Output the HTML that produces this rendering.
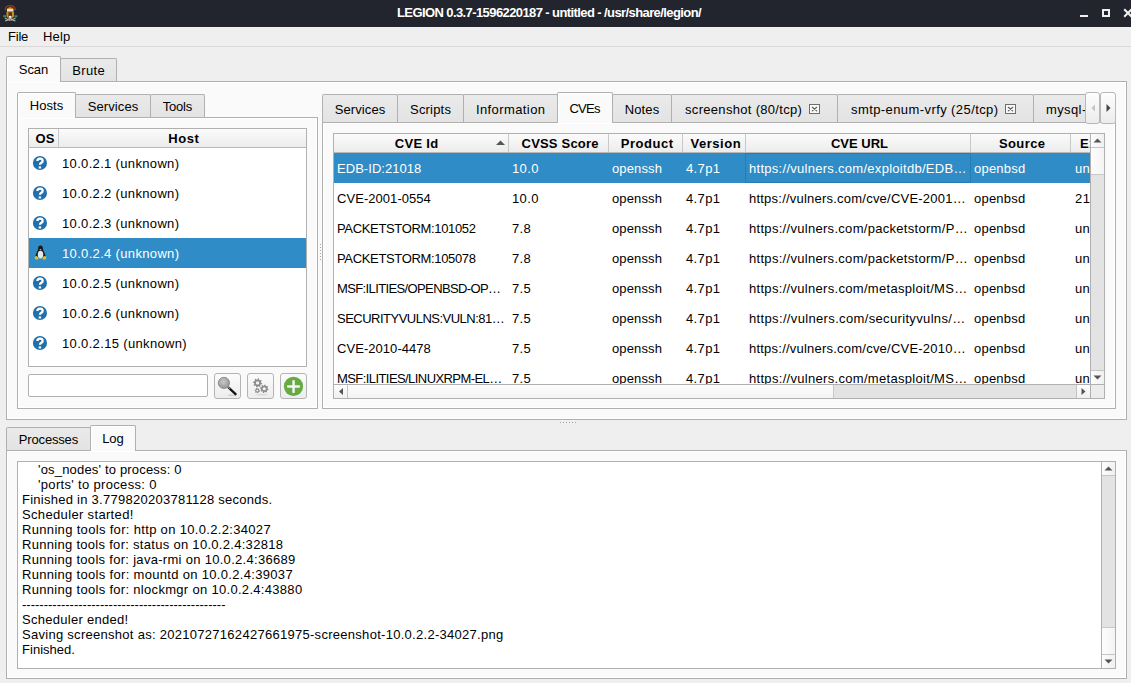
<!DOCTYPE html>
<html><head><meta charset="utf-8"><title>LEGION</title><style>html,body{margin:0;padding:0}
body{width:1131px;height:683px;overflow:hidden;background:#efefef;position:relative;font-family:"Liberation Sans",sans-serif;font-size:13px}
div,span,svg{position:absolute}
span{white-space:pre;line-height:15px}</style></head><body>
<div style="left:0px;top:0px;width:1131px;height:27px;background:#22252d"></div>
<svg style="position:absolute;left:0px;top:2px" width="22" height="22" viewBox="0 0 22 22">
<path d="M5.2 8.2 Q5.5 3.6 10.2 3.5 Q14.9 3.6 15.2 8.2" stroke="#8e3424" stroke-width="1.7" fill="none"/>
<path d="M6.8 8 Q7 5.2 10.2 5.2 Q13.4 5.2 13.6 8z" fill="#c89a28"/>
<rect x="7" y="7.2" width="6.4" height="2.4" fill="#e8e8e0"/>
<path d="M6.5 9.6 H14 V14.5 L12.6 15.8 H7.9 L6.5 14.5z" fill="#c4921a"/>
<rect x="8.4" y="10.2" width="3.6" height="4.6" fill="#5a3210"/>
<ellipse cx="10.2" cy="14.8" rx="1.4" ry="1.1" fill="#f4f4f4"/>
<rect x="3.2" y="13.2" width="2.8" height="2" fill="#2f8a78"/>
<rect x="14.5" y="13.2" width="2.8" height="2" fill="#2f8a78"/>
<path d="M4.8 18.8 L10.2 15.6 L15.8 18.8 L15 19.6 L10.2 17.4 L5.6 19.6z" fill="#b8b8b0"/>
<path d="M4.8 16 L10 18.5 M15.6 16 L10.4 18.5" stroke="#a8a8a0" stroke-width="1.2"/>
</svg>
<span style="left:397.00px;top:5px;letter-spacing:-0.594px;color:#ffffff;font-weight:bold;">LEGION 0.3.7-1596220187 - untitled - /usr/share/legion/</span>
<div style="left:1080px;top:15px;width:8px;height:2px;background:#f0f0f0"></div>
<div style="left:1102px;top:9px;width:8px;height:8px;border:2px solid #f0f0f0;box-sizing:border-box"></div>
<svg style="position:absolute;left:1123px;top:8px" width="10" height="10" viewBox="0 0 10 10">
<path d="M1.2 1.2 L8.8 8.8 M8.8 1.2 L1.2 8.8" stroke="#f0f0f0" stroke-width="2"/></svg>
<div style="left:0px;top:27px;width:1131px;height:19px;background:#efefef"></div>
<span style="left:8.00px;top:29px;letter-spacing:-0.219px;color:#000;">File</span>
<span style="left:43.00px;top:29px;letter-spacing:0.156px;color:#000;">Help</span>
<div style="left:0px;top:46px;width:1131px;height:1px;background:#d9d9d9"></div>
<div style="left:6px;top:81px;width:1121px;height:339px;background:#fafafa;border:1px solid #b0b0b0;box-sizing:border-box;box-shadow:inset 0 0 0 1px #ffffff"></div>
<div style="left:60px;top:58px;width:57px;height:23px;background:linear-gradient(#eaeaea,#e3e3e3);border:1px solid #b0b0b0;border-bottom:none;border-radius:2px 2px 0 0;box-sizing:border-box"></div>
<span style="left:72.24px;top:63px;letter-spacing:0.359px;color:#000;">Brute</span>
<div style="left:6px;top:56px;width:55px;height:26px;background:#fafafa;border:1px solid #b0b0b0;border-bottom:none;border-radius:2px 2px 0 0;box-sizing:border-box;box-shadow:inset 1px 1px 0 #fff"></div>
<span style="left:18.85px;top:62px;letter-spacing:-0.113px;color:#000;">Scan</span>
<div style="left:17px;top:117px;width:301px;height:292px;background:#fafafa;border:1px solid #b0b0b0;box-sizing:border-box;box-shadow:inset 0 0 0 1px #ffffff"></div>
<div style="left:75px;top:94px;width:76px;height:23px;background:linear-gradient(#eaeaea,#e3e3e3);border:1px solid #b0b0b0;border-bottom:none;border-radius:2px 2px 0 0;box-sizing:border-box"></div>
<span style="left:87.74px;top:99px;letter-spacing:0.096px;color:#000;">Services</span>
<div style="left:150px;top:94px;width:55px;height:23px;background:linear-gradient(#eaeaea,#e3e3e3);border:1px solid #b0b0b0;border-bottom:none;border-radius:2px 2px 0 0;box-sizing:border-box"></div>
<span style="left:162.64px;top:99px;letter-spacing:-0.159px;color:#000;">Tools</span>
<div style="left:17px;top:92px;width:59px;height:26px;background:#fafafa;border:1px solid #b0b0b0;border-bottom:none;border-radius:2px 2px 0 0;box-sizing:border-box;box-shadow:inset 1px 1px 0 #fff"></div>
<span style="left:29.75px;top:98px;letter-spacing:0.069px;color:#000;">Hosts</span>
<div style="left:28px;top:128px;width:279px;height:239px;background:#fff;border:1px solid #b0b0b0;box-sizing:border-box"></div>
<div style="left:29px;top:129px;width:277px;height:18px;background:linear-gradient(#fbfbfb,#ececec)"></div>
<div style="left:29px;top:147px;width:277px;height:1px;background:#b9b9b9"></div>
<div style="left:58px;top:129px;width:1px;height:18px;background:#c9c9c9"></div>
<span style="left:35.59px;top:131px;letter-spacing:0.031px;color:#000;font-weight:bold;">OS</span>
<span style="left:168.20px;top:131px;letter-spacing:0.570px;color:#000;font-weight:bold;">Host</span>
<svg style="position:absolute;left:32px;top:155px" width="16" height="16" viewBox="0 0 16 16">
<circle cx="7.95" cy="8" r="7.05" fill="#1f70ac"/>
<path d="M5.4 6.1 Q5.4 3.7 8 3.7 Q10.65 3.7 10.65 5.9 Q10.65 7.2 9.2 7.9 Q8 8.5 8 9.8" stroke="#fff" stroke-width="2.3" fill="none"/>
<rect x="6.7" y="11.4" width="2.4" height="2.1" fill="#fff"/>
</svg>
<span style="left:62.00px;top:156px;letter-spacing:0.336px;color:#000;">10.0.2.1 (unknown)</span>
<svg style="position:absolute;left:32px;top:185px" width="16" height="16" viewBox="0 0 16 16">
<circle cx="7.95" cy="8" r="7.05" fill="#1f70ac"/>
<path d="M5.4 6.1 Q5.4 3.7 8 3.7 Q10.65 3.7 10.65 5.9 Q10.65 7.2 9.2 7.9 Q8 8.5 8 9.8" stroke="#fff" stroke-width="2.3" fill="none"/>
<rect x="6.7" y="11.4" width="2.4" height="2.1" fill="#fff"/>
</svg>
<span style="left:62.00px;top:186px;letter-spacing:0.336px;color:#000;">10.0.2.2 (unknown)</span>
<svg style="position:absolute;left:32px;top:215px" width="16" height="16" viewBox="0 0 16 16">
<circle cx="7.95" cy="8" r="7.05" fill="#1f70ac"/>
<path d="M5.4 6.1 Q5.4 3.7 8 3.7 Q10.65 3.7 10.65 5.9 Q10.65 7.2 9.2 7.9 Q8 8.5 8 9.8" stroke="#fff" stroke-width="2.3" fill="none"/>
<rect x="6.7" y="11.4" width="2.4" height="2.1" fill="#fff"/>
</svg>
<span style="left:62.00px;top:216px;letter-spacing:0.336px;color:#000;">10.0.2.3 (unknown)</span>
<div style="left:29px;top:238px;width:277px;height:30px;background:#308cc6"></div>
<svg style="position:absolute;left:31.5px;top:244px" width="17" height="17" viewBox="0 0 16 16">
<path d="M8 1.5 Q10.3 1.5 10.3 4.5 Q10.5 6.5 11.8 8.5 Q13 10.5 12.5 13 L3.5 13 Q3 10.5 4.2 8.5 Q5.5 6.5 5.7 4.5 Q5.7 1.5 8 1.5z" fill="#1a1a1a"/>
<ellipse cx="8" cy="10" rx="2.6" ry="3.6" fill="#dde8f0"/>
<path d="M6.8 4.6 L9.2 4.6 L8 5.8z" fill="#e8c020"/>
<path d="M2.5 12.5 Q3.5 10.5 5.5 12 L6.2 14 Q4.5 15.2 2.8 14z M13.5 12.5 Q12.5 10.5 10.5 12 L9.8 14 Q11.5 15.2 13.2 14z" fill="#d8c030"/>
</svg>
<span style="left:62.00px;top:246px;letter-spacing:0.336px;color:#fff;">10.0.2.4 (unknown)</span>
<svg style="position:absolute;left:32px;top:275px" width="16" height="16" viewBox="0 0 16 16">
<circle cx="7.95" cy="8" r="7.05" fill="#1f70ac"/>
<path d="M5.4 6.1 Q5.4 3.7 8 3.7 Q10.65 3.7 10.65 5.9 Q10.65 7.2 9.2 7.9 Q8 8.5 8 9.8" stroke="#fff" stroke-width="2.3" fill="none"/>
<rect x="6.7" y="11.4" width="2.4" height="2.1" fill="#fff"/>
</svg>
<span style="left:62.00px;top:276px;letter-spacing:0.336px;color:#000;">10.0.2.5 (unknown)</span>
<svg style="position:absolute;left:32px;top:305px" width="16" height="16" viewBox="0 0 16 16">
<circle cx="7.95" cy="8" r="7.05" fill="#1f70ac"/>
<path d="M5.4 6.1 Q5.4 3.7 8 3.7 Q10.65 3.7 10.65 5.9 Q10.65 7.2 9.2 7.9 Q8 8.5 8 9.8" stroke="#fff" stroke-width="2.3" fill="none"/>
<rect x="6.7" y="11.4" width="2.4" height="2.1" fill="#fff"/>
</svg>
<span style="left:62.00px;top:306px;letter-spacing:0.336px;color:#000;">10.0.2.6 (unknown)</span>
<svg style="position:absolute;left:32px;top:335px" width="16" height="16" viewBox="0 0 16 16">
<circle cx="7.95" cy="8" r="7.05" fill="#1f70ac"/>
<path d="M5.4 6.1 Q5.4 3.7 8 3.7 Q10.65 3.7 10.65 5.9 Q10.65 7.2 9.2 7.9 Q8 8.5 8 9.8" stroke="#fff" stroke-width="2.3" fill="none"/>
<rect x="6.7" y="11.4" width="2.4" height="2.1" fill="#fff"/>
</svg>
<span style="left:62.00px;top:336px;letter-spacing:0.340px;color:#000;">10.0.2.15 (unknown)</span>
<div style="left:28px;top:374px;width:180px;height:23px;background:#fff;border:1px solid #b0b0b0;border-radius:2px;box-sizing:border-box"></div>
<div style="left:214px;top:373px;width:27px;height:26px;background:linear-gradient(#fbfbfb,#ededed);border:1px solid #b4b4b4;border-radius:3px;box-sizing:border-box"></div>
<div style="left:247px;top:373px;width:27px;height:26px;background:linear-gradient(#fbfbfb,#ededed);border:1px solid #b4b4b4;border-radius:3px;box-sizing:border-box"></div>
<div style="left:280px;top:373px;width:27px;height:26px;background:linear-gradient(#fbfbfb,#ededed);border:1px solid #b4b4b4;border-radius:3px;box-sizing:border-box"></div>
<svg style="position:absolute;left:214px;top:373px" width="27" height="26" viewBox="0 0 27 26">
<defs><radialGradient id="mg" cx="0.45" cy="0.4" r="0.65"><stop offset="0" stop-color="#c8cac8"/><stop offset="1" stop-color="#8e9290"/></radialGradient></defs>
<ellipse cx="18" cy="22.3" rx="4" ry="1" fill="#c8c8c8" opacity="0.7"/>
<line x1="14.6" y1="14.6" x2="21.6" y2="21.2" stroke="#151515" stroke-width="2.3" stroke-linecap="round"/>
<line x1="14" y1="14" x2="16" y2="16" stroke="#7a8088" stroke-width="1.2"/>
<circle cx="9.9" cy="9.9" r="5.6" fill="url(#mg)" stroke="#808080" stroke-width="0.8"/>
</svg>
<svg style="position:absolute;left:247px;top:373px" width="27" height="26" viewBox="0 0 27 26"><ellipse cx="14.5" cy="21.6" rx="6.5" ry="0.9" fill="#d0d0d0" opacity="0.6"/><polygon points="15.18,10.35 15.00,11.24 13.60,11.50 13.23,12.06 13.52,13.46 12.77,13.96 11.59,13.16 10.93,13.29 10.15,14.48 9.26,14.30 9.00,12.90 8.44,12.53 7.04,12.82 6.54,12.07 7.34,10.89 7.21,10.23 6.02,9.45 6.20,8.56 7.60,8.30 7.97,7.74 7.68,6.34 8.43,5.84 9.61,6.64 10.27,6.51 11.05,5.32 11.94,5.50 12.20,6.90 12.76,7.27 14.16,6.98 14.66,7.73 13.86,8.91 13.99,9.57" fill="#8c8c8c"/><circle cx="10.6" cy="9.9" r="1.66" fill="#f6f6f6"/><polygon points="12.98,17.95 12.79,18.63 11.89,18.82 11.52,19.19 11.33,20.09 10.65,20.28 10.04,19.58 9.54,19.45 8.66,19.74 8.16,19.24 8.45,18.36 8.32,17.86 7.62,17.25 7.81,16.57 8.71,16.38 9.08,16.01 9.27,15.11 9.95,14.92 10.56,15.62 11.06,15.75 11.94,15.46 12.44,15.96 12.15,16.84 12.28,17.34" fill="#8c8c8c"/><circle cx="10.3" cy="17.6" r="0.97" fill="#f6f6f6"/><polygon points="21.58,16.22 21.41,17.05 20.11,17.30 19.76,17.82 20.03,19.12 19.33,19.59 18.22,18.84 17.61,18.97 16.88,20.08 16.05,19.91 15.80,18.61 15.28,18.26 13.98,18.53 13.51,17.83 14.26,16.72 14.13,16.11 13.02,15.38 13.19,14.55 14.49,14.30 14.84,13.78 14.57,12.48 15.27,12.01 16.38,12.76 16.99,12.63 17.72,11.52 18.55,11.69 18.80,12.99 19.32,13.34 20.62,13.07 21.09,13.77 20.34,14.88 20.47,15.49" fill="#8c8c8c"/><circle cx="17.3" cy="15.8" r="1.55" fill="#f6f6f6"/></svg>
<svg style="position:absolute;left:283px;top:376px" width="21" height="21" viewBox="0 0 21 21">
<circle cx="10.5" cy="10.4" r="9.6" fill="#68aa42"/>
<rect x="9.3" y="3.9" width="2.5" height="13.2" rx="1.2" fill="#f4f4f4"/>
<rect x="3.9" y="9.2" width="13.2" height="2.5" rx="1.2" fill="#f4f4f4"/>
</svg>
<div style="left:320px;top:244px;width:1px;height:1px;background:#a4a4a4"></div>
<div style="left:560px;top:422px;width:1px;height:1px;background:#a4a4a4"></div>
<div style="left:320px;top:247px;width:1px;height:1px;background:#a4a4a4"></div>
<div style="left:563px;top:422px;width:1px;height:1px;background:#a4a4a4"></div>
<div style="left:320px;top:250px;width:1px;height:1px;background:#a4a4a4"></div>
<div style="left:566px;top:422px;width:1px;height:1px;background:#a4a4a4"></div>
<div style="left:320px;top:253px;width:1px;height:1px;background:#a4a4a4"></div>
<div style="left:569px;top:422px;width:1px;height:1px;background:#a4a4a4"></div>
<div style="left:320px;top:256px;width:1px;height:1px;background:#a4a4a4"></div>
<div style="left:572px;top:422px;width:1px;height:1px;background:#a4a4a4"></div>
<div style="left:320px;top:259px;width:1px;height:1px;background:#a4a4a4"></div>
<div style="left:575px;top:422px;width:1px;height:1px;background:#a4a4a4"></div>
<div style="left:322px;top:122px;width:794px;height:287px;background:#fafafa;border:1px solid #b0b0b0;box-sizing:border-box;box-shadow:inset 0 0 0 1px #ffffff"></div>
<div style="left:322px;top:88px;width:763px;height:36px;overflow:hidden;">
<div style="left:0px;top:6px;width:76px;height:28px;background:linear-gradient(#eaeaea,#e3e3e3);border:1px solid #b0b0b0;border-bottom:none;border-radius:2px 2px 0 0;box-sizing:border-box"></div>
<span style="left:12.74px;top:14px;letter-spacing:0.096px;color:#000;">Services</span>
<div style="left:75px;top:6px;width:67px;height:28px;background:linear-gradient(#eaeaea,#e3e3e3);border:1px solid #b0b0b0;border-bottom:none;border-radius:2px 2px 0 0;box-sizing:border-box"></div>
<span style="left:88.06px;top:14px;letter-spacing:0.190px;color:#000;">Scripts</span>
<div style="left:141px;top:6px;width:95px;height:28px;background:linear-gradient(#eaeaea,#e3e3e3);border:1px solid #b0b0b0;border-bottom:none;border-radius:2px 2px 0 0;box-sizing:border-box"></div>
<span style="left:153.96px;top:14px;letter-spacing:0.403px;color:#000;">Information</span>
<div style="left:290px;top:6px;width:60px;height:28px;background:linear-gradient(#eaeaea,#e3e3e3);border:1px solid #b0b0b0;border-bottom:none;border-radius:2px 2px 0 0;box-sizing:border-box"></div>
<span style="left:302.73px;top:14px;letter-spacing:0.141px;color:#000;">Notes</span>
<div style="left:349px;top:6px;width:167px;height:28px;background:linear-gradient(#eaeaea,#e3e3e3);border:1px solid #b0b0b0;border-bottom:none;border-radius:2px 2px 0 0;box-sizing:border-box"></div>
<span style="left:363.00px;top:14px;letter-spacing:0.313px;color:#000;">screenshot (80/tcp)</span>
<div style="left:487px;top:16px;width:11px;height:10px;border:1px solid #6e6e6e;box-sizing:border-box;background:#f8f8f8"></div>
<svg style="position:absolute;left:487px;top:16px" width="11" height="10" viewBox="0 0 11 10"><path d="M3.3 3.3 L7.7 6.9 M7.7 3.3 L3.3 6.9" stroke="#606060" stroke-width="1.2" stroke-linecap="round"/></svg>
<div style="left:515px;top:6px;width:197px;height:28px;background:linear-gradient(#eaeaea,#e3e3e3);border:1px solid #b0b0b0;border-bottom:none;border-radius:2px 2px 0 0;box-sizing:border-box"></div>
<span style="left:529.00px;top:14px;letter-spacing:0.414px;color:#000;">smtp-enum-vrfy (25/tcp)</span>
<div style="left:683px;top:16px;width:11px;height:10px;border:1px solid #6e6e6e;box-sizing:border-box;background:#f8f8f8"></div>
<svg style="position:absolute;left:683px;top:16px" width="11" height="10" viewBox="0 0 11 10"><path d="M3.3 3.3 L7.7 6.9 M7.7 3.3 L3.3 6.9" stroke="#606060" stroke-width="1.2" stroke-linecap="round"/></svg>
<div style="left:711px;top:6px;width:218px;height:28px;background:linear-gradient(#eaeaea,#e3e3e3);border:1px solid #b0b0b0;border-bottom:none;border-radius:2px 2px 0 0;box-sizing:border-box"></div>
<span style="left:724.00px;top:14px;letter-spacing:0.388px;color:#000;">mysql-info (3306/tcp)</span>
<div style="left:235px;top:4px;width:56px;height:31px;background:#fafafa;border:1px solid #b0b0b0;border-bottom:none;border-radius:2px 2px 0 0;box-sizing:border-box;box-shadow:inset 1px 1px 0 #fff"></div>
<span style="left:247.44px;top:13px;letter-spacing:-0.707px;color:#000;">CVEs</span>
</div>
<div style="left:1085px;top:92px;width:15px;height:32px;background:linear-gradient(#fdfdfd,#ececec);border:1px solid #b8b8b8;border-radius:3px;box-sizing:border-box"></div>
<div style="left:1100px;top:92px;width:16px;height:32px;background:linear-gradient(#fdfdfd,#ececec);border:1px solid #b8b8b8;border-radius:3px;box-sizing:border-box"></div>
<svg style="position:absolute;left:1086px;top:92px" width="30" height="32" viewBox="0 0 30 32"><path d="M9 12.5 L5.5 16 L9 19.5z" fill="#c4c4c4"/><path d="M20.5 12 L24.5 16 L20.5 20z" fill="#444"/></svg>
<div style="left:333px;top:133px;width:772px;height:266px;background:#fff;border:1px solid #b0b0b0;box-sizing:border-box"></div>
<div style="left:334px;top:134px;width:756px;height:18px;background:linear-gradient(#fbfbfb,#ececec)"></div>
<div style="left:334px;top:152px;width:756px;height:1px;background:#b9b9b9"></div>
<div style="left:508px;top:134px;width:1px;height:18px;background:#c9c9c9"></div>
<div style="left:608px;top:134px;width:1px;height:18px;background:#c9c9c9"></div>
<div style="left:682px;top:134px;width:1px;height:18px;background:#c9c9c9"></div>
<div style="left:745px;top:134px;width:1px;height:18px;background:#c9c9c9"></div>
<div style="left:970px;top:134px;width:1px;height:18px;background:#c9c9c9"></div>
<div style="left:1070px;top:134px;width:1px;height:18px;background:#c9c9c9"></div>
<div style="left:334px;top:134px;width:756px;height:18px;overflow:hidden;">
<span style="left:60.87px;top:2px;letter-spacing:0.273px;color:#000;font-weight:bold;">CVE Id</span>
<span style="left:187.56px;top:2px;letter-spacing:0.192px;color:#000;font-weight:bold;">CVSS Score</span>
<span style="left:286.80px;top:2px;letter-spacing:0.549px;color:#000;font-weight:bold;">Product</span>
<span style="left:356.40px;top:2px;letter-spacing:0.538px;color:#000;font-weight:bold;">Version</span>
<span style="left:496.96px;top:2px;letter-spacing:0.004px;color:#000;font-weight:bold;">CVE URL</span>
<span style="left:664.91px;top:2px;letter-spacing:0.422px;color:#000;font-weight:bold;">Source</span>
<span style="left:746.00px;top:2px;letter-spacing:0.541px;color:#000;font-weight:bold;">Exploit ID</span>
<svg style="position:absolute;left:162px;top:6px" width="9" height="5" viewBox="0 0 9 5"><path d="M0 5 L4.5 0.5 L9 5z" fill="#555"/></svg>
</div>
<div style="left:334px;top:153px;width:756px;height:231px;overflow:hidden;">
<div style="left:0px;top:0px;width:756px;height:30px;background:#308cc6"></div>
<div style="left:411px;top:0px;width:226px;height:30px;border:1px solid #2a7cb0;box-sizing:border-box"></div>
<span style="left:3.00px;top:8px;letter-spacing:0.047px;color:#fff;">EDB-ID:21018</span>
<span style="left:178.00px;top:8px;letter-spacing:0.355px;color:#fff;">10.0</span>
<span style="left:278.00px;top:8px;letter-spacing:0.129px;color:#fff;">openssh</span>
<span style="left:352.00px;top:8px;letter-spacing:0.362px;color:#fff;">4.7p1</span>
<span style="left:415.00px;top:8px;letter-spacing:0.282px;color:#fff;">https://vulners.com/exploitdb/EDB…</span>
<span style="left:640.00px;top:8px;letter-spacing:0.223px;color:#fff;">openbsd</span>
<span style="left:741.00px;top:8px;letter-spacing:0.355px;color:#fff;">unknown</span>
<span style="left:3.00px;top:38px;letter-spacing:0.052px;color:#000;">CVE-2001-0554</span>
<span style="left:178.00px;top:38px;letter-spacing:0.355px;color:#000;">10.0</span>
<span style="left:278.00px;top:38px;letter-spacing:0.129px;color:#000;">openssh</span>
<span style="left:352.00px;top:38px;letter-spacing:0.362px;color:#000;">4.7p1</span>
<span style="left:415.00px;top:38px;letter-spacing:0.223px;color:#000;">https://vulners.com/cve/CVE-2001…</span>
<span style="left:640.00px;top:38px;letter-spacing:0.223px;color:#000;">openbsd</span>
<span style="left:741.00px;top:38px;letter-spacing:0.406px;color:#000;">21018</span>
<span style="left:3.00px;top:68px;letter-spacing:-0.341px;color:#000;">PACKETSTORM:101052</span>
<span style="left:178.00px;top:68px;letter-spacing:0.339px;color:#000;">7.8</span>
<span style="left:278.00px;top:68px;letter-spacing:0.129px;color:#000;">openssh</span>
<span style="left:352.00px;top:68px;letter-spacing:0.362px;color:#000;">4.7p1</span>
<span style="left:415.00px;top:68px;letter-spacing:0.298px;color:#000;">https://vulners.com/packetstorm/P…</span>
<span style="left:640.00px;top:68px;letter-spacing:0.223px;color:#000;">openbsd</span>
<span style="left:741.00px;top:68px;letter-spacing:0.355px;color:#000;">unknown</span>
<span style="left:3.00px;top:98px;letter-spacing:-0.341px;color:#000;">PACKETSTORM:105078</span>
<span style="left:178.00px;top:98px;letter-spacing:0.339px;color:#000;">7.8</span>
<span style="left:278.00px;top:98px;letter-spacing:0.129px;color:#000;">openssh</span>
<span style="left:352.00px;top:98px;letter-spacing:0.362px;color:#000;">4.7p1</span>
<span style="left:415.00px;top:98px;letter-spacing:0.298px;color:#000;">https://vulners.com/packetstorm/P…</span>
<span style="left:640.00px;top:98px;letter-spacing:0.223px;color:#000;">openbsd</span>
<span style="left:741.00px;top:98px;letter-spacing:0.355px;color:#000;">unknown</span>
<span style="left:3.00px;top:128px;letter-spacing:-0.622px;color:#000;">MSF:ILITIES/OPENBSD-OP…</span>
<span style="left:178.00px;top:128px;letter-spacing:0.339px;color:#000;">7.5</span>
<span style="left:278.00px;top:128px;letter-spacing:0.129px;color:#000;">openssh</span>
<span style="left:352.00px;top:128px;letter-spacing:0.362px;color:#000;">4.7p1</span>
<span style="left:415.00px;top:128px;letter-spacing:0.306px;color:#000;">https://vulners.com/metasploit/MS…</span>
<span style="left:640.00px;top:128px;letter-spacing:0.223px;color:#000;">openbsd</span>
<span style="left:741.00px;top:128px;letter-spacing:0.355px;color:#000;">unknown</span>
<span style="left:3.00px;top:158px;letter-spacing:-0.511px;color:#000;">SECURITYVULNS:VULN:81…</span>
<span style="left:178.00px;top:158px;letter-spacing:0.339px;color:#000;">7.5</span>
<span style="left:278.00px;top:158px;letter-spacing:0.129px;color:#000;">openssh</span>
<span style="left:352.00px;top:158px;letter-spacing:0.362px;color:#000;">4.7p1</span>
<span style="left:415.00px;top:158px;letter-spacing:0.347px;color:#000;">https://vulners.com/securityvulns/…</span>
<span style="left:640.00px;top:158px;letter-spacing:0.223px;color:#000;">openbsd</span>
<span style="left:741.00px;top:158px;letter-spacing:0.355px;color:#000;">unknown</span>
<span style="left:3.00px;top:188px;letter-spacing:0.052px;color:#000;">CVE-2010-4478</span>
<span style="left:178.00px;top:188px;letter-spacing:0.339px;color:#000;">7.5</span>
<span style="left:278.00px;top:188px;letter-spacing:0.129px;color:#000;">openssh</span>
<span style="left:352.00px;top:188px;letter-spacing:0.362px;color:#000;">4.7p1</span>
<span style="left:415.00px;top:188px;letter-spacing:0.223px;color:#000;">https://vulners.com/cve/CVE-2010…</span>
<span style="left:640.00px;top:188px;letter-spacing:0.223px;color:#000;">openbsd</span>
<span style="left:741.00px;top:188px;letter-spacing:0.355px;color:#000;">unknown</span>
<span style="left:3.00px;top:218px;letter-spacing:-0.574px;color:#000;">MSF:ILITIES/LINUXRPM-EL…</span>
<span style="left:178.00px;top:218px;letter-spacing:0.339px;color:#000;">7.5</span>
<span style="left:278.00px;top:218px;letter-spacing:0.129px;color:#000;">openssh</span>
<span style="left:352.00px;top:218px;letter-spacing:0.362px;color:#000;">4.7p1</span>
<span style="left:415.00px;top:218px;letter-spacing:0.306px;color:#000;">https://vulners.com/metasploit/MS…</span>
<span style="left:640.00px;top:218px;letter-spacing:0.223px;color:#000;">openbsd</span>
<span style="left:741.00px;top:218px;letter-spacing:0.355px;color:#000;">unknown</span>
</div>
<div style="left:333px;top:384px;width:772px;height:15px;background:#e3e3e3;border:1px solid #b0b0b0;box-sizing:border-box"></div>
<div style="left:334px;top:385px;width:13px;height:13px;background:linear-gradient(#fdfdfd,#f0f0f0)"></div>
<div style="left:347px;top:385px;width:1px;height:13px;background:#c4c4c4"></div>
<div style="left:348px;top:385px;width:486px;height:13px;background:linear-gradient(#fdfdfd,#f3f3f3);border-right:1px solid #c8c8c8;box-sizing:border-box"></div>
<div style="left:1076px;top:385px;width:14px;height:13px;background:linear-gradient(#fdfdfd,#f0f0f0);border-left:1px solid #c4c4c4;box-sizing:border-box"></div>
<div style="left:1090px;top:384px;width:15px;height:15px;background:#ececec;border:1px solid #b0b0b0;box-sizing:border-box"></div>
<svg style="position:absolute;left:334px;top:385px" width="14" height="13" viewBox="0 0 14 13"><path d="M9 3 L5 6.5 L9 10z" fill="#555"/></svg>
<svg style="position:absolute;left:1076px;top:385px" width="14" height="13" viewBox="0 0 14 13"><path d="M5.5 3 L9.5 6.5 L5.5 10z" fill="#555"/></svg>
<div style="left:1090px;top:133px;width:15px;height:252px;background:#e3e3e3;border:1px solid #b0b0b0;box-sizing:border-box"></div>
<div style="left:1091px;top:134px;width:13px;height:13px;background:linear-gradient(90deg,#fdfdfd,#f0f0f0)"></div>
<div style="left:1091px;top:147px;width:13px;height:1px;background:#c4c4c4"></div>
<div style="left:1091px;top:148px;width:13px;height:27px;background:linear-gradient(90deg,#fdfdfd,#f3f3f3);border-bottom:1px solid #c8c8c8;box-sizing:border-box"></div>
<div style="left:1091px;top:370px;width:13px;height:14px;background:linear-gradient(90deg,#fdfdfd,#f0f0f0);border-top:1px solid #c4c4c4;box-sizing:border-box"></div>
<svg style="position:absolute;left:1091px;top:134px" width="13" height="13" viewBox="0 0 13 13"><path d="M2.5 8.5 L6.5 4.5 L10.5 8.5z" fill="#555"/></svg>
<svg style="position:absolute;left:1091px;top:371px" width="13" height="13" viewBox="0 0 13 13"><path d="M2.5 4.5 L6.5 8.5 L10.5 4.5z" fill="#555"/></svg>
<div style="left:6px;top:450px;width:1121px;height:229px;background:#fafafa;border:1px solid #b0b0b0;box-sizing:border-box;box-shadow:inset 0 0 0 1px #ffffff"></div>
<div style="left:6px;top:427px;width:85px;height:23px;background:linear-gradient(#eaeaea,#e3e3e3);border:1px solid #b0b0b0;border-bottom:none;border-radius:2px 2px 0 0;box-sizing:border-box"></div>
<span style="left:18.83px;top:432px;letter-spacing:-0.170px;color:#000;">Processes</span>
<div style="left:90px;top:425px;width:46px;height:26px;background:#fafafa;border:1px solid #b0b0b0;border-bottom:none;border-radius:2px 2px 0 0;box-sizing:border-box;box-shadow:inset 1px 1px 0 #fff"></div>
<span style="left:102.23px;top:431px;letter-spacing:-0.083px;color:#000;">Log</span>
<div style="left:17px;top:461px;width:1099px;height:208px;background:#fff;border:1px solid #b0b0b0;box-sizing:border-box"></div>
<span style="left:38.00px;top:462px;letter-spacing:0.178px;color:#000;">&#x27;os_nodes&#x27; to process: 0</span>
<span style="left:38.00px;top:477px;letter-spacing:0.325px;color:#000;">&#x27;ports&#x27; to process: 0</span>
<span style="left:22.00px;top:492px;letter-spacing:0.262px;color:#000;">Finished in 3.779820203781128 seconds.</span>
<span style="left:22.00px;top:507px;letter-spacing:0.343px;color:#000;">Scheduler started!</span>
<span style="left:22.00px;top:522px;letter-spacing:0.326px;color:#000;">Running tools for: http on 10.0.2.2:34027</span>
<span style="left:22.00px;top:537px;letter-spacing:0.293px;color:#000;">Running tools for: status on 10.0.2.4:32818</span>
<span style="left:22.00px;top:552px;letter-spacing:0.298px;color:#000;">Running tools for: java-rmi on 10.0.2.4:36689</span>
<span style="left:22.00px;top:567px;letter-spacing:0.317px;color:#000;">Running tools for: mountd on 10.0.2.4:39037</span>
<span style="left:22.00px;top:582px;letter-spacing:0.306px;color:#000;">Running tools for: nlockmgr on 10.0.2.4:43880</span>
<span style="left:22.00px;top:597px;letter-spacing:0.000px;color:#000;">-----------------------------------------------</span>
<span style="left:22.00px;top:612px;letter-spacing:0.276px;color:#000;">Scheduler ended!</span>
<span style="left:22.00px;top:627px;letter-spacing:0.283px;color:#000;">Saving screenshot as: 20210727162427661975-screenshot-10.0.2.2-34027.png</span>
<span style="left:22.00px;top:642px;letter-spacing:0.024px;color:#000;">Finished.</span>
<div style="left:1101px;top:461px;width:15px;height:208px;background:#e3e3e3;border:1px solid #b0b0b0;box-sizing:border-box"></div>
<div style="left:1102px;top:462px;width:13px;height:13px;background:linear-gradient(90deg,#fdfdfd,#f0f0f0)"></div>
<div style="left:1102px;top:475px;width:13px;height:1px;background:#c4c4c4"></div>
<div style="left:1102px;top:627px;width:13px;height:27px;background:linear-gradient(90deg,#fdfdfd,#f3f3f3);border-top:1px solid #c8c8c8;box-sizing:border-box"></div>
<div style="left:1102px;top:654px;width:13px;height:14px;background:linear-gradient(90deg,#fdfdfd,#f0f0f0);border-top:1px solid #c4c4c4;box-sizing:border-box"></div>
<svg style="position:absolute;left:1102px;top:462px" width="13" height="13" viewBox="0 0 13 13"><path d="M2.5 8.5 L6.5 4.5 L10.5 8.5z" fill="#555"/></svg>
<svg style="position:absolute;left:1102px;top:655px" width="13" height="13" viewBox="0 0 13 13"><path d="M2.5 4.5 L6.5 8.5 L10.5 4.5z" fill="#555"/></svg>
</body></html>
